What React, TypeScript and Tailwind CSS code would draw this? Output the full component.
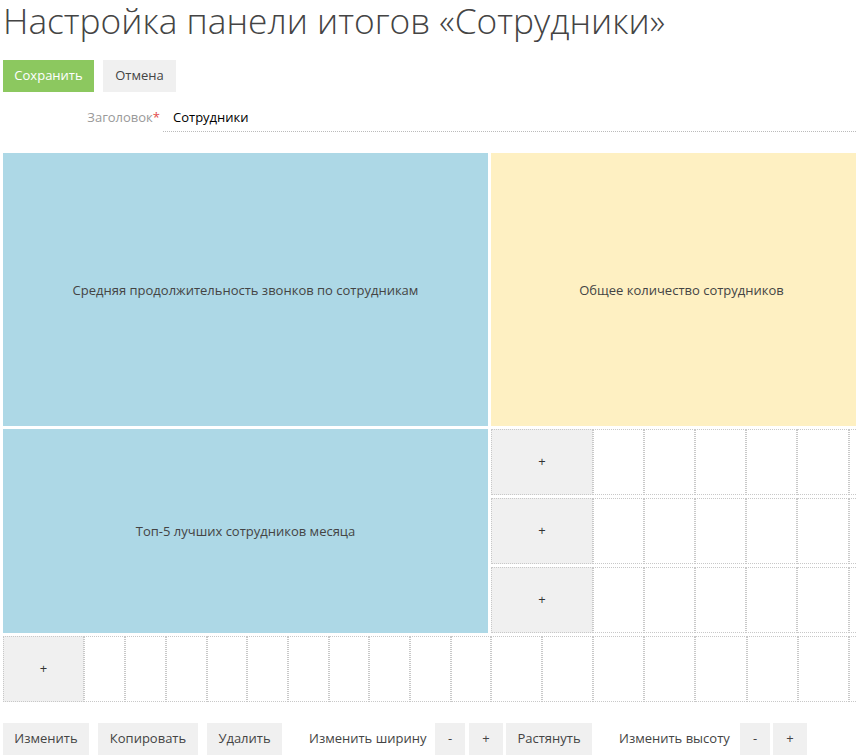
import React from "react";

const font = { fontFamily: '"Open Sans", "Noto Sans", sans-serif' };

function Cell({ w, plus, className = "" }: { w: number; plus?: boolean; className?: string }) {
  return (
    <div
      className={`shrink-0 h-full border border-dotted border-[#c8c8c8] flex items-center justify-center text-[13px] text-[#333] ${plus ? "bg-[#f0f0f0]" : "bg-white"} ${className}`}
      style={{ width: w }}
    >
      {plus ? "+" : null}
    </div>
  );
}

function Btn({ children, className = "" }: { children: React.ReactNode; className?: string }) {
  return (
    <div className={`h-[32px] flex items-center justify-center bg-[#f0f0f0] text-[13px] text-[#444] ${className}`}>
      {children}
    </div>
  );
}

export default function App() {
  const rightCols = [51, 51, 51, 51, 52, 51, 51, 51, 51];
  const bottomLeft = [41, 41, 41, 40, 41, 41, 40, 41, 41, 40];
  return (
    <div className="w-[856px] h-[756px] overflow-hidden bg-white" style={font}>
      <div className="pl-[3px] h-[60px] overflow-visible">
        <h1 className="text-[35.3px] font-light leading-[40px] text-[#444] whitespace-nowrap">
          Настройка панели итогов «Сотрудники»
        </h1>
      </div>
      <div className="flex gap-[9px] pl-[3px]">
        <div className="h-[32px] w-[91px] flex items-center justify-center bg-[#8cc85f] text-white text-[13px]">
          Сохранить
        </div>
        <div className="h-[32px] w-[73px] flex items-center justify-center bg-[#f0f0f0] text-[#444] text-[13px]">
          Отмена
        </div>
      </div>
      <div className="flex items-end mt-[10px] h-[30px]">
        <div className="w-[163px] pr-[3px] text-right text-[13px] text-[#999] leading-[30px] pt-[2px]">
          Заголовок<span className="text-[#e24a4a]">*</span>
        </div>
        <div className="flex-1 border-b border-dotted border-[#bbb] h-[30px] flex items-center pl-[10px] pt-[2px] text-[13px] text-black">
          Сотрудники
        </div>
      </div>

      <div className="mt-[21px] pl-[3px] flex flex-col gap-[3px]">
        <div className="flex gap-[3px] h-[273px]">
          <div className="w-[485px] shrink-0 bg-[#add8e6] flex items-center justify-center text-[13px] text-[#444] pt-[2px]">
            Средняя продолжительность звонков по сотрудникам
          </div>
          <div className="w-[600px] shrink-0 bg-[#fef0c2] flex items-center justify-start text-[13px] text-[#444] pt-[2px]">
            <span className="w-[381px] text-center">Общее количество сотрудников</span>
          </div>
        </div>
        <div className="flex gap-[3px] h-[204px]">
          <div className="w-[485px] shrink-0 bg-[#add8e6] flex items-center justify-center text-[13px] text-[#444] pt-[2px]">
            Топ-5 лучших сотрудников месяца
          </div>
          <div className="flex flex-col gap-[3px]">
            {[0, 1, 2].map((r) => (
              <div key={r} className="flex h-[66px]">
                <Cell w={102} plus />
                {rightCols.slice(0, 6).map((w, i) => (
                  <Cell key={i} w={w} />
                ))}
              </div>
            ))}
          </div>
        </div>
        <div className="flex h-[66px]">
          <Cell w={81} plus />
          {bottomLeft.map((w, i) => (
            <Cell key={"l" + i} w={w} />
          ))}
          {rightCols.map((w, i) => (
            <Cell key={"r" + i} w={w} />
          ))}
        </div>
      </div>

      <div className="mt-[21px] pl-[3px] flex items-center text-[13px] text-[#444]">
        <Btn className="w-[86px]">Изменить</Btn>
        <Btn className="w-[100px] ml-[9px]">Копировать</Btn>
        <Btn className="w-[75px] ml-[9px]">Удалить</Btn>
        <span className="ml-[27px] w-[116px] whitespace-nowrap">Изменить ширину</span>
        <Btn className="w-[30px] ml-[10px]">-</Btn>
        <Btn className="w-[34px] ml-[4px]">+</Btn>
        <Btn className="w-[86px] ml-[3px]">Растянуть</Btn>
        <span className="ml-[27px] w-[110px] whitespace-nowrap">Изменить высоту</span>
        <Btn className="w-[30px] ml-[11px]">-</Btn>
        <Btn className="w-[34px] ml-[3px]">+</Btn>
      </div>
    </div>
  );
}
